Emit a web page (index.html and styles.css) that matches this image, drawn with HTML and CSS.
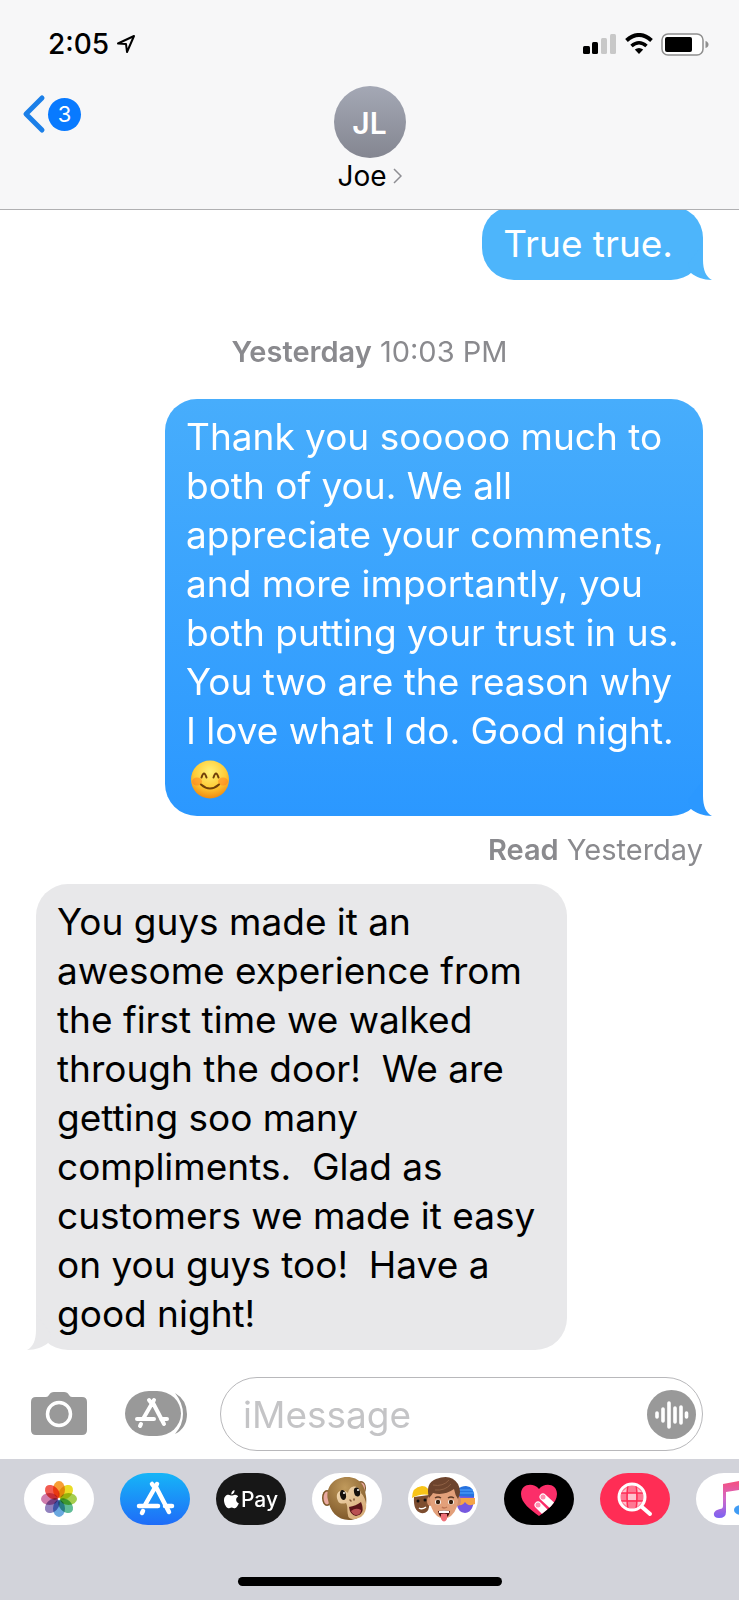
FILE: index.html
```html
<!DOCTYPE html>
<html lang="en">
<head>
    <meta charset="UTF-8">
    <meta name="viewport" content="width=device-width, initial-scale=1.0">
    <title>Messages - Joe</title>
    <link rel="stylesheet" href="styles.css">
</head>
<body>
    <header class="header">
        <div class="status-bar">
            <div class="clock">
                <span>2:05</span>
                <svg width="20" height="20" viewBox="0 0 20 20" aria-hidden="true">
                    <path d="M2 9.500 L18 2 L11 18 L10 10 Z" fill="none" stroke="#000" stroke-width="2" stroke-linejoin="round"/>
                </svg>
            </div>
            <div class="indicators">
                <svg width="34" height="22" viewBox="0 0 34 22" aria-hidden="true">
                    <rect x="0" y="13" width="7" height="8" rx="1.500"/>
                    <rect x="9" y="9" width="6" height="12" rx="1.500"/>
                    <rect x="18" y="5" width="6" height="16" rx="1.500" fill="#c8c8c8"/>
                    <rect x="27" y="1" width="6" height="20" rx="1.500" fill="#c8c8c8"/>
                </svg>
                <svg width="28" height="22" viewBox="0 0 28 22" aria-hidden="true">
                    <path d="M1.500 7.500 Q14 -3.500 26.500 7.500" fill="none" stroke="#000" stroke-width="4"/>
                    <path d="M6.500 13 Q14 6.500 21.500 13" fill="none" stroke="#000" stroke-width="3.600"/>
                    <path d="M9.800 16.500 Q14 13.500 18.200 16.500 L14 21 Z"/>
                </svg>
                <svg width="48" height="23" viewBox="0 0 48 23" aria-hidden="true">
                    <rect x="1" y="1" width="41" height="21" rx="6" fill="#fff" stroke="#8f8f8f" stroke-width="1.500"/>
                    <rect x="4" y="4" width="27" height="15" rx="2"/>
                    <path d="M44.500 8 Q47.500 9 47.500 11.500 T44.500 15 Z" fill="#8f8f8f"/>
                </svg>
            </div>
        </div>
        <div class="nav">
            <button class="back-btn" aria-label="Back, 3 unread">
                <svg width="24" height="40" viewBox="0 0 24 40" aria-hidden="true">
                    <path d="M20 4 L4 20 L20 36" fill="none" stroke="#1b7fe8" stroke-width="5" stroke-linecap="round" stroke-linejoin="round"/>
                </svg>
                <span class="badge">3</span>
            </button>
            <button class="contact">
                <span class="avatar">JL</span>
                <span class="contact-name">Joe
                    <svg width="9" height="16" viewBox="0 0 9 16" aria-hidden="true">
                        <path d="M1 1 L8 8 L1 15" fill="none" stroke="#8e8e93" stroke-width="1.500"/>
                    </svg>
                </span>
            </button>
        </div>
    </header>

    <main class="thread">
        <div class="bubble sent first">
            True true.
            <svg class="tail" width="24" height="36" viewBox="0 0 24 36" aria-hidden="true"><path d="M15 0 V16 C15 26 18 33 24 36 C15 36 8 33 3 29 L0 20 Z"/></svg>
        </div>
        <p class="timestamp"><strong>Yesterday</strong> 10:03 PM</p>
        <div class="bubble sent long">
            Thank you sooooo much to<br>
            both of you. We all<br>
            appreciate your comments,<br>
            and more importantly, you<br>
            both putting your trust in us.<br>
            You two are the reason why<br>
            I love what I do. Good night.<br>
            <svg class="emoji" viewBox="0 0 40 40" role="img" aria-label="smiling face">
                <defs>
                    <radialGradient id="face" cx="50%" cy="30%" r="70%">
                        <stop offset="0" stop-color="#fff27a"/>
                        <stop offset=".6" stop-color="#ffcb35"/>
                        <stop offset="1" stop-color="#f08a10"/>
                    </radialGradient>
                </defs>
                <circle cx="20" cy="20" r="19" fill="url(#face)"/>
                <ellipse cx="7" cy="22" rx="5" ry="4" fill="#ff7a1e" opacity=".5"/>
                <ellipse cx="33" cy="22" rx="5" ry="4" fill="#ff7a1e" opacity=".5"/>
                <path d="M11.500 18 Q14 10 16.500 18 M23.500 18 Q26 10 28.500 18 M11 25 Q20 33 29 25" fill="none" stroke="#70400a" stroke-width="2" stroke-linecap="round"/>
            </svg>
            <svg class="tail" width="24" height="36" viewBox="0 0 24 36" aria-hidden="true"><path d="M15 0 V16 C15 26 18 33 24 36 C15 36 8 33 3 29 L0 20 Z"/></svg>
        </div>
        <p class="receipt"><strong>Read</strong> Yesterday</p>
        <div class="bubble received">
            You guys made it an<br>
            awesome experience from<br>
            the first time we walked<br>
            through the door!&nbsp; We are<br>
            getting soo many<br>
            compliments.&nbsp; Glad as<br>
            customers we made it easy<br>
            on you guys too!&nbsp; Have a<br>
            good night!
            <svg class="tail" width="24" height="36" viewBox="0 0 24 36" aria-hidden="true"><path d="M9 0 V16 C9 26 6 33 0 36 C9 36 16 33 21 29 L24 20 Z"/></svg>
        </div>
    </main>

    <form class="composer">
        <button type="button" class="icon-btn" aria-label="Camera">
            <svg width="56" height="44" viewBox="0 0 56 44">
                <path d="M5 5 H15 Q17 5 18 3 Q19.500 0 23 0 H33 Q36.500 0 38 3 Q39 5 41 5 H51 Q56 5 56 10 V38 Q56 43 51 43 H5 Q0 43 0 38 V10 Q0 5 5 5 Z" fill="#999"/>
                <circle cx="28" cy="22" r="11.500" fill="none" stroke="#fff" stroke-width="3.500"/>
            </svg>
        </button>
        <button type="button" class="icon-btn" aria-label="Apps">
            <svg width="63" height="46" viewBox="0 0 63 46">
                <path d="M50 2 Q62 9 62 23 T50 43 Q58 34 58 23 T50 2 Z" fill="#999"/>
                <rect x="0" y="0" width="56" height="45" rx="24" ry="22.500" fill="#999"/>
                <g stroke="#fff" stroke-width="4" stroke-linecap="round" fill="none">
                    <path d="M28 12 L39 33 M29 9 L18 28 M12 28 H29 M36 28 H42 M16 33 L15 35 M24 9 L27 13"/>
                </g>
            </svg>
        </button>
        <div class="field">
            <input type="text" placeholder="iMessage" aria-label="iMessage">
            <button type="button" class="voice-btn" aria-label="Record audio">
                <svg width="49" height="49" viewBox="0 0 49 49">
                    <circle cx="24.500" cy="24.500" r="24.500" fill="#999"/>
                    <path d="M10 23 V27 M16 19 V31 M22 13 V37 M28 18 V32 M34 17 V33 M39.500 23 V27" stroke="#fff" stroke-width="3.600" stroke-linecap="round"/>
                </svg>
            </button>
        </div>
    </form>

    <footer class="dock">
        <div class="apps">
            <button class="app" aria-label="Photos">
                <svg width="70" height="52" viewBox="-35 -26 70 52">
                    <g class="petals">
                        <ellipse cy="-9.500" rx="6" ry="8.500" fill="#f7941d"/>
                        <ellipse cy="-9.500" rx="6" ry="8.500" fill="#e8d80e" transform="rotate(45)"/>
                        <ellipse cy="-9.500" rx="6" ry="8.500" fill="#9bc93c" transform="rotate(90)"/>
                        <ellipse cy="-9.500" rx="6" ry="8.500" fill="#4fb58c" transform="rotate(135)"/>
                        <ellipse cy="-9.500" rx="6" ry="8.500" fill="#5a9fdc" transform="rotate(180)"/>
                        <ellipse cy="-9.500" rx="6" ry="8.500" fill="#8574b8" transform="rotate(225)"/>
                        <ellipse cy="-9.500" rx="6" ry="8.500" fill="#cb6fa4" transform="rotate(270)"/>
                        <ellipse cy="-9.500" rx="6" ry="8.500" fill="#f0493e" transform="rotate(315)"/>
                    </g>
                </svg>
            </button>
            <button class="app app-store" aria-label="App Store">
                <svg width="70" height="52" viewBox="0 0 70 52">
                    <path d="M36 14 L49 39 M37 11 L25 32 M19 33 H38 M45 33 H52 M23 38 L22 40 M32 11 L35 15" fill="none" stroke="#fff" stroke-width="4.500" stroke-linecap="round"/>
                </svg>
            </button>
            <button class="app apple-pay">
                <svg width="15" height="19" viewBox="0 0 15 19" aria-hidden="true">
                    <path d="M10.500 0 Q10.800 3.600 7.300 4.500 Q7 1.200 10.500 0 Z M7.500 5.600 C9 5.600 9.500 4.700 11 4.700 C12.500 4.700 13.500 5.500 14.200 6.400 C11.200 8 11.600 12 14.800 13.200 C14 15.500 12.500 18.200 10.800 18.200 C9.600 18.200 9.300 17.400 7.700 17.400 C6.100 17.400 5.600 18.200 4.500 18.200 C2.500 18.200 0 14 0 10.300 C0 6.700 2.200 4.800 4.400 4.800 C5.800 4.800 6.600 5.600 7.500 5.600 Z" fill="#fff"/>
                </svg>
                Pay
            </button>
            <button class="app" aria-label="Animoji">
                <svg width="70" height="52" viewBox="0 0 70 52">
                    <defs>
                        <radialGradient id="fur" cx="45%" cy="25%" r="75%">
                            <stop offset="0" stop-color="#c09a5c"/>
                            <stop offset="1" stop-color="#80592a"/>
                        </radialGradient>
                        <linearGradient id="muzzle" x1="0" y1="0" x2="1" y2="1">
                            <stop offset="0" stop-color="#f3dab4"/>
                            <stop offset="1" stop-color="#d0a36c"/>
                        </linearGradient>
                    </defs>
                    <ellipse cx="15" cy="25" rx="5" ry="8" fill="#7d5729"/>
                    <ellipse cx="15" cy="25" rx="3.500" ry="6.500" fill="#e9a9a0"/>
                    <ellipse cx="49" cy="15" rx="5" ry="7" fill="#7d5729"/>
                    <ellipse cx="49.500" cy="15" rx="3.500" ry="5.500" fill="#e9a9a0"/>
                    <path d="M16 27 C13 13 23 4 35 4 C48 4 53 13 54 23 C56 37 49 47 37 47 C25 47 18 38 16 27 Z" fill="url(#fur)"/>
                    <path d="M26 28 C22 20 29 14 36 20 C38 11 47 12 49 20 C55 26 57 38 49 44 C43 47 36 47 36 42 C35 38 36 33 34 30 C31 31 27 31 26 28 Z" fill="url(#muzzle)"/>
                    <ellipse cx="31" cy="22" rx="3" ry="5" fill="#15100c" transform="rotate(-12 31 22)"/>
                    <ellipse cx="45" cy="19" rx="3" ry="4.500" fill="#15100c" transform="rotate(-12 45 19)"/>
                    <circle cx="32" cy="20" r="1" fill="#fff"/>
                    <circle cx="46" cy="17" r="1" fill="#fff"/>
                    <path d="M38 27 L39 28 M42 26 L42 27" stroke="#7c5230" stroke-width="1.500" stroke-linecap="round"/>
                    <path d="M37 34 Q44 33 49 29 Q54 41 44 43 Q38 42 37 34 Z" fill="#5b1519"/>
                    <path d="M39 38 Q44 34 49 37 Q49 42 44 42 Q41 42 39 38 Z" fill="#b95053"/>
                </svg>
            </button>
            <button class="app" aria-label="Memoji">
                <svg width="70" height="52" viewBox="0 0 70 52">
                    <path d="M6 24 Q5 38 13 40 Q20 41 21 34 L21 22 Z" fill="#7d4d2f"/>
                    <path d="M4 25 Q4 14 14 13 Q21 13 22 22 Q12 20 4 25 Z" fill="#f8c418"/>
                    <circle cx="10" cy="28" r="1.500" fill="#111"/>
                    <circle cx="17" cy="27" r="1.500" fill="#111"/>
                    <path d="M11 35 Q14 37 18 34" stroke="#fff" stroke-width="1.500" fill="none"/>
                    <path d="M49 20 H66 Q67 39 57 40 Q50 39 49 32 Z" fill="#7658df"/>
                    <path d="M49 23 Q48 13 58 13 Q67 14 66 24 Z" fill="#2672df"/>
                    <path d="M51 17 H65 M50 20 H66" stroke="#55a7ff" stroke-width="1"/>
                    <path d="M50 25 H67 V31 Q60 34 57 29 Q54 34 50 31 Z" fill="#f4a447"/>
                    <ellipse cx="22" cy="28" rx="3" ry="5" fill="#d38f6a"/>
                    <ellipse cx="50" cy="28" rx="3" ry="5" fill="#d38f6a"/>
                    <path d="M22 21 Q22 12 36 11 Q50 12 50 22 Q51 36 43 43 Q36 48 29 43 Q21 36 22 21 Z" fill="#e3a07a"/>
                    <path d="M21 25 Q17 10 28 6 Q43 0 50 11 Q54 19 50 26 Q47 22 46 16 Q36 23 25 20 Q24 22 21 25 Z" fill="#6d442d"/>
                    <path d="M27 17 Q37 18 43 11 M25 12 Q35 14 41 7" fill="none" stroke="#8e6043" stroke-width="1"/>
                    <path d="M27 25 Q30 23 33 25 M40 25 Q43 23 46 25" fill="none" stroke="#5c3825" stroke-width="1.500"/>
                    <ellipse cx="30" cy="29" rx="3" ry="2.500" fill="#fff"/>
                    <ellipse cx="43" cy="29" rx="3" ry="2.500" fill="#fff"/>
                    <circle cx="30" cy="29" r="2.200" fill="#38200f"/>
                    <circle cx="43" cy="29" r="2.200" fill="#38200f"/>
                    <path d="M34 34 Q36 36 39 34" fill="none" stroke="#bd7554" stroke-width="1.500"/>
                    <path d="M30 38 Q36 37 42 38 Q41 45 36 45 Q31 45 30 38 Z" fill="#4a1010"/>
                    <path d="M31 38 Q36 37 41 38 V40 H31 Z" fill="#fff"/>
                    <path d="M33 41 Q36 40 39 41 V46 Q36 51 33 46 Z" fill="#ef7179"/>
                </svg>
            </button>
            <button class="app digital-touch" aria-label="Digital Touch">
                <svg width="70" height="52" viewBox="0 0 70 52">
                    <defs>
                        <clipPath id="heart"><path d="M35 43 C27 37 17 30 17 21 C17 11 29 9 35 16 C41 9 53 11 53 21 C53 30 43 37 35 43 Z"/></clipPath>
                    </defs>
                    <g clip-path="url(#heart)">
                        <rect width="70" height="52" fill="#fb2e69"/>
                        <path d="M39 24 L53 37 M34 32 L46 44" stroke="#fff" stroke-width="7" stroke-linecap="round"/>
                    </g>
                    <circle cx="39" cy="24" r="2.500" fill="#ff8eb0"/>
                    <circle cx="34" cy="32" r="2.500" fill="#ff8eb0"/>
                </svg>
            </button>
            <button class="app image-search" aria-label="#images">
                <svg width="70" height="52" viewBox="0 0 70 52">
                    <circle cx="32" cy="24" r="13" fill="#ff7893"/>
                    <path d="M28 20 H36 V27 H28 Z M21 20 H28 V14 Z M36 20 V14 L43 20 Z M21 28 H28 V34 Z M36 28 H43 L36 35 Z" fill="#ffc3cf"/>
                    <path d="M28 11 Q26 24 28 37 M36 11 Q38 24 36 37 M19 20 H45 M19 28 H45" fill="none" stroke="#ff2d55" stroke-width="1.500"/>
                    <circle cx="32" cy="24" r="13" fill="none" stroke="#fff" stroke-width="3"/>
                    <path d="M42 34 L50 41" stroke="#fff" stroke-width="4" stroke-linecap="round"/>
                </svg>
            </button>
            <button class="app" aria-label="Music">
                <svg width="70" height="52" viewBox="0 0 70 52">
                    <defs>
                        <linearGradient id="note" x1="0" y1="0" x2="0" y2="1">
                            <stop offset="0" stop-color="#fa4d76"/>
                            <stop offset=".5" stop-color="#d269c8"/>
                            <stop offset="1" stop-color="#7b62f3"/>
                        </linearGradient>
                    </defs>
                    <path d="M27 11 L53 6 V37 H50 V16 L30 19 V39 Q30 45 23 45 Q17 45 18 40 Q19 37 24 36 Q27 36 27 33 Z" fill="url(#note)"/>
                    <ellipse cx="45" cy="37" rx="7" ry="5" fill="#409cf4"/>
                </svg>
            </button>
        </div>
        <div class="home-indicator"></div>
    </footer>
</body>
</html>
```
FILE: styles.css
```css
* {
    box-sizing: border-box;
}
body {
    font-family: Inter, "Liberation Sans", sans-serif;
    background-color: #fff;
    color: #000;
    margin: 0;
    min-height: 100vh;
    display: flex;
    flex-direction: column;
}
button {
    font-family: inherit;
    color: inherit;
    background: none;
    border: none;
    padding: 0;
    cursor: pointer;
}
svg {
    display: block;
    flex: none;
}
p {
    margin: 0;
}

/* header */
.header {
    position: relative;
    z-index: 1;
    background-color: #f7f7f8;
    border-bottom: 1px solid #b0b0b2;
    padding-bottom: 15px;
}
.status-bar {
    display: flex;
    justify-content: space-between;
    align-items: center;
    height: 86px;
    padding: 2px 30px 0 48px;
}
.clock {
    display: flex;
    align-items: center;
    gap: 7px;
    font-size: 28px;
    font-weight: 500;
}
.indicators {
    display: flex;
    align-items: center;
    gap: 8px;
}
.nav {
    display: grid;
    grid-template-columns: 1fr auto 1fr;
    align-items: start;
}
.back-btn {
    display: flex;
    align-items: center;
    gap: 2px;
    padding: 8px 0 0 22px;
}
.badge {
    width: 33px;
    height: 33px;
    border-radius: 50%;
    background-color: #087aff;
    color: #fff;
    font-size: 22px;
    line-height: 33px;
}
.contact {
    display: flex;
    flex-direction: column;
    align-items: center;
}
.avatar {
    width: 72px;
    height: 72px;
    border-radius: 50%;
    background: linear-gradient(#a4a8b5, #848691);
    color: #fff;
    font-size: 30px;
    font-weight: 600;
    line-height: 74px;
}
.contact-name {
    display: flex;
    align-items: center;
    gap: 6px;
    font-size: 28px;
    line-height: 36px;
}

/* messages */
.thread {
    flex: 1;
    display: flex;
    flex-direction: column;
    padding: 0 36px;
}
.bubble {
    position: relative;
    padding: 13px 21px 12px;
    border-radius: 32px;
    font-size: 37px;
    line-height: 49px;
    white-space: nowrap;
}
.sent {
    align-self: flex-end;
    color: #fff;
    background-color: #4db5fb;
}
.first {
    margin-top: -4px;
    padding-right: 30px;
}
.long {
    width: 538px;
    background: linear-gradient(#47adfc, #2b98ff);
}
.received {
    align-self: flex-start;
    width: 531px;
    background-color: #e8e8ea;
}
.tail {
    position: absolute;
    right: -9px;
    bottom: 0;
    fill: #4db5fb;
}
.long .tail {
    fill: #2b98ff;
}
.received .tail {
    left: -9px;
    right: auto;
    fill: #e8e8ea;
}
.emoji {
    width: 40px;
    height: 49px;
    margin-left: 4px;
}
.timestamp,
.receipt {
    color: #8a8a8e;
    font-size: 29px;
    line-height: 36px;
}
.timestamp {
    margin: 54px 0 29px;
    text-align: center;
}
.receipt {
    margin: 16px 0;
    text-align: right;
}
.timestamp strong,
.receipt strong {
    font-weight: 600;
}

/* message box */
.composer {
    display: flex;
    align-items: center;
    gap: 38px;
    padding: 27px 36px 8px 31px;
}
.field {
    flex: 1;
    min-width: 0;
    display: flex;
    align-items: center;
    height: 74px;
    margin-left: -6px;
    padding: 0 6px 0 22px;
    border: 1px solid #b8b8bb;
    border-radius: 37px;
}
.field input {
    flex: 1;
    min-width: 0;
    padding: 0;
    border: none;
    outline: none;
    background: none;
    font-family: inherit;
    font-size: 37px;
}
.field input::placeholder {
    color: #c4c4c6;
    opacity: 1;
}

/* app strip */
.dock {
    background-color: #d2d3da;
    padding: 14px 0;
}
.apps {
    display: flex;
    gap: 26px;
    padding-left: 24px;
    overflow: hidden;
}
.app {
    flex: none;
    display: flex;
    align-items: center;
    justify-content: center;
    width: 70px;
    height: 52px;
    border-radius: 28px / 26px;
    background-color: #fff;
    overflow: hidden;
}
.petals ellipse {
    mix-blend-mode: multiply;
    opacity: 0.9;
}
.app-store {
    background: linear-gradient(#16b5f7, #1f6cf8);
}
.apple-pay {
    gap: 2px;
    background-color: #171717;
    color: #fff;
    font-size: 21px;
    font-weight: 500;
}
.digital-touch {
    background-color: #000;
}
.image-search {
    background-color: #ff2d55;
}
.home-indicator {
    width: 264px;
    height: 9px;
    margin: 52px auto 0;
    border-radius: 5px;
    background-color: #000;
}
```
